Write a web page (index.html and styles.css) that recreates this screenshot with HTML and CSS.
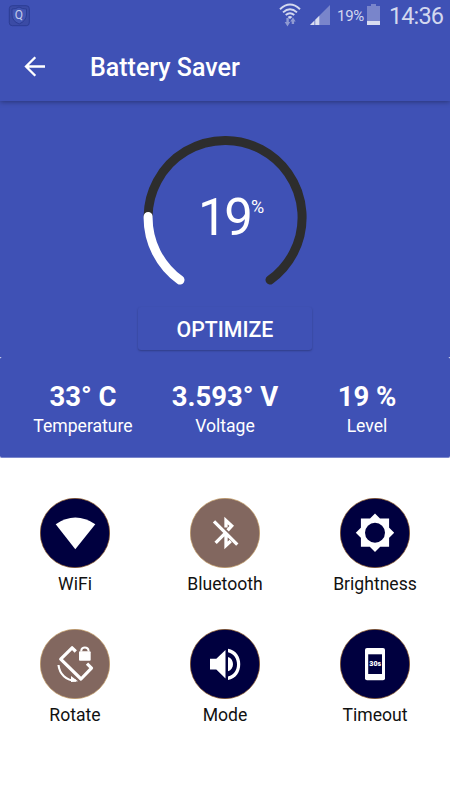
FILE: index.html
```html
<!DOCTYPE html>
<html lang="en">
<head>
<meta charset="utf-8">
<title>Battery Saver</title>
<link rel="stylesheet" href="styles.css">
</head>
<body>
<header class="top">
  <div class="status">
    <svg class="shield" width="22" height="22" viewBox="0 0 22 22">
      <rect x="1.300" y=".7" width="20" height="20" rx="3" fill="#3b4ba5" stroke="#2c3d94" stroke-width="1"/>
      <path d="M4 4Q8 4 11 2Q14 4 18.500 4V10Q18 16 11.200 19Q4 16 4 10Z" fill="#4255b2" stroke="#2c3d94"/>
      <text x="11" y="13.800" text-anchor="middle" class="shield-letter">Q</text>
    </svg>
    <div class="status-right">
      <svg class="wifi-status" width="22" height="24" viewBox="0 0 22 24" fill="none" stroke="#d3d8ef" stroke-width="1.900">
        <path d="M1 6.200Q11 -3 21 6.200M4 9.400Q11 3 18 9.400M6.700 12Q11 8.300 15.300 12"/>
        <path d="M8.600 14Q11 12 13.400 14L11 16Z" fill="#d3d8ef" stroke="none"/>
        <path d="M8.600 15V20M13.900 21V17.500" stroke="#8f9ad2" stroke-width="2.400"/>
        <path d="M5.700 19H11.200L8.500 23.500ZM11.200 18.500H16.700L14 14.500Z" fill="#8f9ad2" stroke="none"/>
      </svg>
      <svg class="signal" width="20" height="20" viewBox="0 0 20 20">
        <path d="M0 20L20 0V20Z" fill="#7985cb"/>
        <path d="M0 20L4.300 15.700V20ZM5.300 20V14.700L9.300 10.700V20Z" fill="#d9ddf0"/>
      </svg>
      <span class="pct">19%</span>
      <svg class="batt" width="13" height="21" viewBox="0 0 13 21">
        <path d="M4 0H9V2H13V21H0V2H4Z" fill="#7985cb"/>
        <path d="M0 17H13V21H0Z" fill="#d9ddf0"/>
      </svg>
      <span class="clock">14:36</span>
    </div>
  </div>
  <div class="bar">
    <svg class="back" width="22" height="22" viewBox="0 0 22 22" fill="none" stroke="#fff" stroke-width="2.300">
      <path d="M21 10.500H2.500M11.300 1.200L2 10.500L11.300 19.800"/>
    </svg>
    <h1>Battery Saver</h1>
  </div>
</header>
<section class="hero">
  <div class="gauge">
    <svg width="164" height="156" viewBox="143 134 164 156" fill="none" stroke-width="9" stroke-linecap="round">
      <path d="M148.100 216A77 77 0 1 1 270 280" stroke="#2d2d2d"/>
      <path d="M148.100 216.500A77 77 0 0 0 180 280" stroke="#fff"/>
    </svg>
    <div class="reading"><span class="num">19</span><span class="unit">%</span></div>
  </div>
  <button class="optimize">OPTIMIZE</button>
</section>
<section class="stats">
  <div class="stat"><strong>33° C</strong><span>Temperature</span></div>
  <div class="stat"><strong>3.593° V</strong><span>Voltage</span></div>
  <div class="stat"><strong>19 %</strong><span>Level</span></div>
</section>
<main class="toggles">
  <div class="toggle">
    <svg class="icon" viewBox="0 0 70 70">
      <circle class="on" cx="35" cy="35" r="34.700"/>
      <path d="M15.700 26.200Q35.300 13 55.300 26.200L35.300 51.300Z" fill="#fff"/>
    </svg>
    <span>WiFi</span>
  </div>
  <div class="toggle">
    <svg class="icon" viewBox="0 0 70 70">
      <circle class="off" cx="35" cy="35" r="34.700"/>
      <g fill="none" stroke="#fff" stroke-width="3.300">
        <path d="M24 23.300L47.300 46.600M25.600 44.900L35.300 35.200M36 29.500V22.600L41.700 27.900L37.600 32.300M36 36V47.500L40.700 43"/>
      </g>
    </svg>
    <span>Bluetooth</span>
  </div>
  <div class="toggle">
    <svg class="icon" viewBox="0 0 70 70">
      <circle class="on" cx="35" cy="35" r="34.700"/>
      <path d="M20.900 20.600H49.100V48.800H20.900ZM35 15.500L54.200 34.700L35 53.900L15.800 34.700Z" fill="#fff"/>
      <circle cx="35" cy="34.700" r="10" fill="#00003f"/>
    </svg>
    <span>Brightness</span>
  </div>
  <div class="toggle">
    <svg class="icon" viewBox="0 0 70 70">
      <circle class="off" cx="35" cy="35" r="34.700"/>
      <g fill="none" stroke="#fff" stroke-width="3.200" stroke-linejoin="round">
        <path d="M35.800 22.500L32.100 18.800L20.700 30.200L41 50L51.500 39.200L47 34.700"/>
        <path d="M18.500 36C19.500 45 26 51.700 36 51.700" stroke-width="2.200"/>
        <path d="M41.300 22.500V21.500A3.600 3 0 0 1 48.500 21.500V22.500" stroke-width="2"/>
      </g>
      <path d="M31 47L38 52.300L31 53Z" fill="#fff"/>
      <rect x="39" y="22.300" width="11.700" height="9.500" rx="1" fill="#fff"/>
    </svg>
    <span>Rotate</span>
  </div>
  <div class="toggle">
    <svg class="icon" viewBox="0 0 70 70">
      <circle class="on" cx="35" cy="35" r="34.700"/>
      <path d="M20 29.800H26.300L35.500 21V49.500L26.300 40.500H20ZM38 28C44.700 30 44.700 40.500 38 42.300ZM38 19.800C54.400 22 54.400 48.700 38 51V47.500C50 45 50 26 38 23.300Z" fill="#fff"/>
    </svg>
    <span>Mode</span>
  </div>
  <div class="toggle">
    <svg class="icon" viewBox="0 0 70 70">
      <circle class="on" cx="35" cy="35" r="34.700"/>
      <rect x="25" y="19" width="20" height="32.300" rx="2" fill="#fff"/>
      <rect x="28.200" y="25.300" width="13.800" height="19.700" fill="#00003f"/>
      <text x="35.200" y="37.400" text-anchor="middle" class="secs">30s</text>
    </svg>
    <span>Timeout</span>
  </div>
</main>
</body>
</html>
```
FILE: styles.css
```css
* { box-sizing: border-box; }
body {
  margin: 0;
  height: 800px;
  background: #fff;
  font-family: Roboto, "Liberation Sans", sans-serif;
  color: #111;
  overflow: hidden;
}
svg { display: block; flex: none; }
.top {
  position: relative;
  height: 101px;
  background: #3f51b5;
  box-shadow: 0 1px 5px rgba(0, 0, 0, .35);
}
.status {
  display: flex;
  justify-content: space-between;
  height: 33px;
  padding: 0 7px 0 8px;
}
.shield { margin-top: 5px; }
.shield-letter { font-size: 12px; fill: #c4cbea; }
.status-right {
  display: flex;
  align-items: flex-start;
  color: #d3d8ef;
}
.wifi-status { margin: 3px 9px 0 0; }
.signal { margin: 5px 7px 0 0; }
.pct {
  width: 27px;
  margin: 6px 3px 0 0;
  font-size: 15px;
  line-height: 20px;
  white-space: nowrap;
  letter-spacing: -.3px;
}
.batt { margin: 4px 9px 0 0; }
.clock {
  width: 54px;
  font-size: 23.500px;
  line-height: 33px;
  letter-spacing: -.9px;
  white-space: nowrap;
}
.bar {
  display: flex;
  align-items: center;
  height: 68px;
  padding-left: 24px;
  gap: 44px;
}
h1 {
  margin: 2px 0 0;
  color: #fff;
  font-size: 25px;
  font-weight: 500;
  line-height: 32px;
}
.hero {
  display: flex;
  flex-direction: column;
  align-items: center;
  height: 256px;
  padding-top: 33px;
  background: #3f51b5;
}
.gauge { display: grid; }
.gauge > * { grid-area: 1 / 1; }
.reading {
  display: flex;
  align-items: flex-start;
  padding: 54px 0 0 55px;
  color: #fff;
}
.num {
  width: 53px;
  font-size: 51px;
  line-height: 60px;
  letter-spacing: -2.500px;
}
.unit {
  margin-top: 8px;
  font-size: 18px;
  line-height: 22px;
}
.optimize {
  width: 174px;
  height: 43px;
  margin-top: 17px;
  padding: 1px 0 0;
  border: 0;
  border-radius: 3px;
  background: #3f51b5;
  box-shadow: 0 1px 2px rgba(0, 0, 0, .25);
  color: #fff;
  font: 500 21.300px Roboto, sans-serif;
}
.stats {
  display: grid;
  grid-template-columns: 1fr 1fr 1fr;
  height: 101px;
  padding: 23px 12px 0;
  background: #3f51b5;
  border-bottom: 1px solid #7a86cc;
  border-radius: 2px;
  color: #fff;
  text-align: center;
}
.stat {
  display: flex;
  flex-direction: column;
  font-size: 17.600px;
  line-height: 24px;
}
.stat strong {
  font-size: 27.500px;
  line-height: 34px;
  font-weight: 700;
}
.toggles {
  display: grid;
  grid-template-columns: 1fr 1fr 1fr;
  grid-auto-rows: 131px;
  padding-top: 40px;
}
.toggle {
  display: flex;
  flex-direction: column;
  align-items: center;
  font-size: 17.600px;
  line-height: 24px;
}
.icon {
  width: 70px;
  height: 70px;
  margin-bottom: 4px;
}
.on { fill: #00003f; stroke: #88531f; stroke-width: .7; }
.off { fill: #82675f; stroke: #c29a61; stroke-width: .7; }
.secs { font-size: 7px; font-weight: 900; fill: #fff; }
```
